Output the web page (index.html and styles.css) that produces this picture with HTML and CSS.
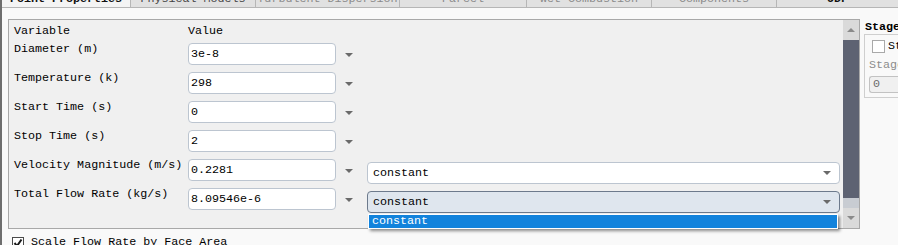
FILE: index.html
```html
<!DOCTYPE html>
<html lang="en">
<head>
  <meta charset="UTF-8" />
  <title>Point Properties</title>
  <link rel="stylesheet" href="styles.css">
</head>
<body>
  <div class="tabs">
    <div class="tab active w1"><span>Point Properties</span></div>
    <div class="tab w2"><span>Physical Models</span></div>
    <div class="tab off w3"><span>Turbulent Dispersion</span></div>
    <div class="tab off w4"><span>Parcel</span></div>
    <div class="tab off w5"><span>Wet Combustion</span></div>
    <div class="tab off w6"><span>Components</span></div>
    <div class="tab strong w7"><span>UDF</span></div>
  </div>

  <div class="main">
    <div class="panel">
      <div class="grid">
        <div class="row head">
          <div class="label">Variable</div>
          <div class="label">Value</div>
        </div>
        <div class="row">
          <div class="label">Diameter (m)</div>
          <div class="field">3e-8</div>
          <span class="caret"></span>
        </div>
        <div class="row">
          <div class="label">Temperature (k)</div>
          <div class="field">298</div>
          <span class="caret"></span>
        </div>
        <div class="row">
          <div class="label">Start Time (s)</div>
          <div class="field">0</div>
          <span class="caret"></span>
        </div>
        <div class="row">
          <div class="label">Stop Time (s)</div>
          <div class="field">2</div>
          <span class="caret"></span>
        </div>
        <div class="row">
          <div class="label">Velocity Magnitude (m/s)</div>
          <div class="field">0.2281</div>
          <span class="caret"></span>
          <div class="combo">constant<span class="caret"></span></div>
        </div>
        <div class="row last">
          <div class="label">Total Flow Rate (kg/s)</div>
          <div class="field">8.09546e-6</div>
          <span class="caret"></span>
          <div class="combo open">constant<span class="caret"></span>
            <div class="popup"><div class="option">constant</div></div>
          </div>
        </div>
      </div>
      <div class="scrollbar">
        <div class="sb-btn"><span class="tri up"></span></div>
        <div class="sb-thumb"></div>
        <div class="sb-track"></div>
        <div class="sb-btn"><span class="tri"></span></div>
      </div>
    </div>

    <div class="side">
      <div class="side-title">Stages</div>
      <div class="group">
        <div class="check-line"><span class="box"></span>Stagger</div>
        <div class="muted">Stages</div>
        <div class="small-field">0</div>
      </div>
    </div>
  </div>

  <div class="footer">
    <span class="box checked">
      <svg width="10" height="10" viewBox="0 0 10 10"><polyline points="1.5,5 4,8 8.5,1.5" fill="none" stroke="#1a1a1a" stroke-width="2"/></svg>
    </span>
    Scale Flow Rate by Face Area
  </div>
</body>
</html>
```

FILE: styles.css
```css
html, body {
  margin: 0;
  padding: 0;
}

body {
  width: 898px;
  height: 245px;
  overflow: hidden;
  box-sizing: border-box;
  border-left: 2px solid #6e6e6e;
  background-color: #f9f9f9;
  font-family: 'Liberation Mono', monospace;
  font-size: 11.7px;
  color: #000;
}

/* tab strip, cut off at the top */
.tabs {
  display: flex;
  height: 8px;
  border-bottom: 1px solid #b6b6b6;
  box-sizing: border-box;
  background: #e1e1e1;
}

.tab {
  height: 7px;
  overflow: hidden;
  border-right: 1px solid #b6b6b6;
  box-sizing: border-box;
  text-align: center;
  color: #444;
}

.tab span {
  display: block;
  margin-top: -8px;
  line-height: 14px;
  white-space: nowrap;
}

.tab.active {
  background: #f4f4f4;
  color: #111;
  font-weight: bold;
}

.tab.off { color: #8a8a8a; }
.tab.strong { color: #111; font-weight: bold; border-right: none; }

.w1 { width: 129px; }
.w2 { width: 125px; }
.w3 { width: 144px; }
.w4 { width: 127px; }
.w5 { width: 125px; }
.w6 { width: 125px; }
.w7 { flex: 1; }

.main {
  display: flex;
  margin-top: 11px;
  padding-left: 6px;
}

.panel {
  display: flex;
  width: 852px;
  height: 210px;
  box-sizing: border-box;
  border: 1px solid #a8a8a8;
  background: #f0f0f0;
}

.grid {
  flex: 1;
  padding: 4px 0 0 5px;
}

.row {
  display: flex;
  align-items: flex-start;
  height: 22px;
  margin-bottom: 7px;
}

.row.last { margin-top: 2px; }

.row.head {
  height: 14px;
  line-height: 14px;
  margin-bottom: 5px;
}

.label {
  width: 174px;
  line-height: 13px;
  white-space: nowrap;
}

.row.head .label { line-height: 14px; }

.field {
  width: 148px;
  height: 22px;
  box-sizing: border-box;
  border: 1px solid #bcc5d0;
  border-radius: 4px;
  background: #fff;
  padding-left: 2px;
  line-height: 20px;
}

.caret {
  flex-shrink: 0;
  width: 0;
  height: 0;
  margin: 10px 0 0 9px;
  border-left: 4px solid transparent;
  border-right: 4px solid transparent;
  border-top: 4px solid #6a6a6a;
}

.combo {
  position: relative;
  display: flex;
  justify-content: space-between;
  width: 473px;
  height: 22px;
  margin: 3px 0 0 14px;
  box-sizing: border-box;
  border: 1px solid #bcc5d0;
  border-radius: 4px;
  background: #fff;
  padding: 0 8px 0 5px;
  line-height: 20px;
}

.combo .caret { margin: 8px 0 0 0; }

.combo.open {
  background: #dfe6ee;
  border-color: #6d7a8c;
}

.popup {
  position: absolute;
  top: 22px;
  left: 0;
  right: 1px;
  border: 1px solid #fff;
  background: #fff;
  box-shadow: 2px 2px 3px rgba(0, 0, 0, 0.45);
}

.option {
  height: 13px;
  line-height: 13px;
  padding-left: 3px;
  background: #1283dc;
  color: #fff;
}

.scrollbar {
  display: flex;
  flex-direction: column;
  width: 16px;
}

.sb-btn {
  height: 20px;
  background: #dadada;
  display: flex;
  align-items: center;
  justify-content: center;
}

.sb-thumb {
  height: 158px;
  background: #5d6272;
}

.sb-track {
  height: 10px;
  background: #c8ccd2;
}

.tri {
  width: 0;
  height: 0;
  border-left: 4px solid transparent;
  border-right: 4px solid transparent;
  border-top: 4px solid #8a8a8a;
}

.tri.up {
  border-top: none;
  border-bottom: 4px solid #8a8a8a;
}

.side {
  flex: 1;
  margin-left: 4px;
  overflow: hidden;
  white-space: nowrap;
}

.side-title {
  margin-top: 1px;
  padding-left: 1px;
  line-height: 14px;
  font-weight: bold;
}

.group {
  height: 64px;
  box-sizing: border-box;
  border: 1px solid #cfcfcf;
  border-right: none;
  padding: 4px 0 0 4px;
}

.check-line {
  display: flex;
  align-items: center;
  gap: 3px;
  height: 14px;
  padding-left: 3px;
}

.box {
  flex-shrink: 0;
  display: inline-flex;
  align-items: center;
  justify-content: center;
  width: 13px;
  height: 13px;
  box-sizing: border-box;
  border: 1px solid #a9a9a9;
  background: #fff;
}

.muted {
  margin-top: 5px;
  line-height: 14px;
  color: #8c8c8c;
}

.small-field {
  margin-top: 4px;
  height: 17px;
  box-sizing: border-box;
  border: 1px solid #c2c2c2;
  border-right: none;
  border-radius: 3px 0 0 3px;
  background: #f0f0f0;
  padding-left: 3px;
  line-height: 15px;
  color: #6c6c6c;
}

.footer {
  display: flex;
  align-items: center;
  gap: 7px;
  margin-top: 7px;
  padding-left: 10px;
  line-height: 13px;
  white-space: nowrap;
}

.box.checked {
  width: 12px;
  height: 12px;
  border-color: #4a4a4a;
}
```
